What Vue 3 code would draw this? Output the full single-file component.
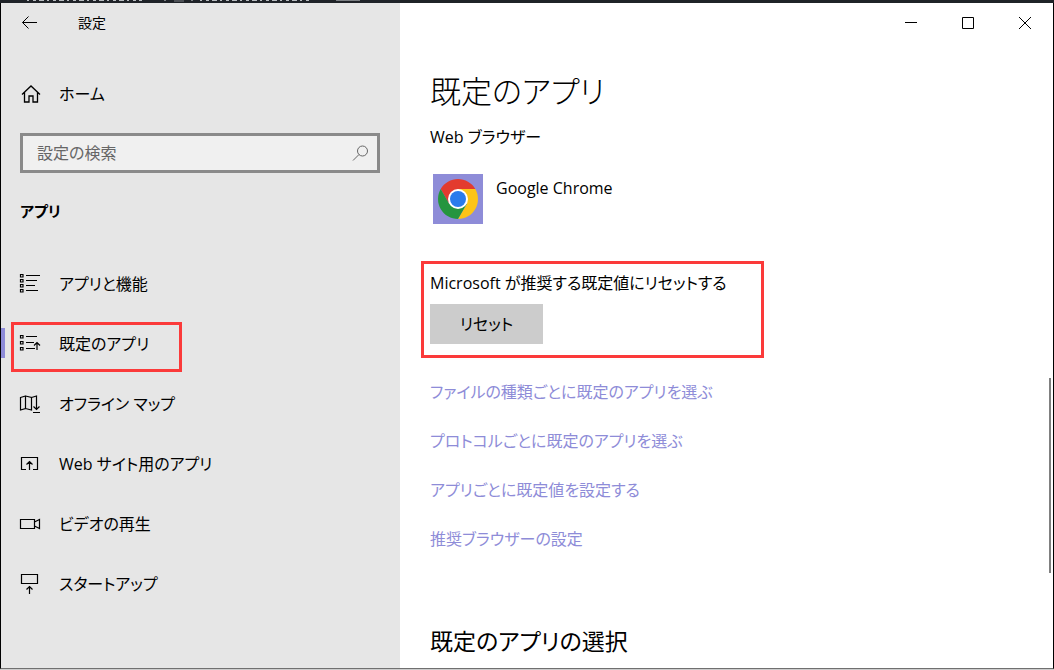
<script setup>
import { ref } from 'vue'

const search = ref('')
const current = ref('default')

const navItems = [
  { id: 'features', label: 'アプリと機能' },
  { id: 'default', label: '既定のアプリ' },
  { id: 'maps', label: 'オフライン マップ' },
  { id: 'web', label: 'Web サイト用のアプリ' },
  { id: 'video', label: 'ビデオの再生' },
  { id: 'startup', label: 'スタートアップ' }
]

const links = [
  'ファイルの種類ごとに既定のアプリを選ぶ',
  'プロトコルごとに既定のアプリを選ぶ',
  'アプリごとに既定値を設定する',
  '推奨ブラウザーの設定'
]
</script>

<template>
  <div class="screen">
    <div class="backdrop">
      <!-- lower edge of the window behind -->
      <svg width="340" height="3" viewBox="0 0 340 3">
        <path class="dashes" d="M0 .5h115M173 .5h112" />
        <path class="solid" d="M137 .5h2M147 1h10M164 .5h2M309 .5h24" />
      </svg>
    </div>
    <div class="window">
      <aside class="sidebar">
        <header class="title-bar">
          <button class="back" type="button" aria-label="戻る">
            <svg width="16" height="14" viewBox="0 0 16 14">
              <path d="M16 6.500H1.500M7.500.5l-6 6 6 6" />
            </svg>
          </button>
          <span class="window-title">設定</span>
        </header>

        <a class="home" href="#">
          <svg width="20" height="20" viewBox="0 0 20 20">
            <path d="M1 10.500L10 2l9 8.500M3.500 8.500V18H8v-6h4v6h4.500V8.500" />
          </svg>
          <span>ホーム</span>
        </a>

        <form class="search" @submit.prevent>
          <input v-model="search" type="text" placeholder="設定の検索" aria-label="設定の検索">
          <button type="submit" aria-label="検索">
            <svg width="18" height="18" viewBox="0 0 18 18">
              <circle cx="11.500" cy="7" r="5" />
              <path d="M8 10.500L2 16.500" />
            </svg>
          </button>
        </form>

        <h2 class="category">アプリ</h2>

        <nav>
          <ul class="nav-list">
            <li v-for="item in navItems" :key="item.id">
              <a
                href="#"
                class="nav-item"
                :class="{ active: current === item.id, marked: item.id === 'default' }"
                @click.prevent="current = item.id"
              >
                <svg width="22" height="22" viewBox="0 0 22 22">
                  <template v-if="item.id === 'features'">
                    <path class="dots" d="M1.500 1.500h2.500v2.500h-2.500zM1.500 6.500h2.500v2.500h-2.500zM1.500 11.500h2.500v2.500h-2.500zM1.500 16.500h2.500v2.500h-2.500z" />
                    <path d="M7 2.500h14M7 7.500h11M7 12.500h9M7 17.500h12" />
                  </template>
                  <template v-else-if="item.id === 'default'">
                    <path class="dots" d="M1.500 2.500h2.500v2.500h-2.500zM1.500 8.500h2.500v2.500h-2.500zM1.500 14.500h2.500v2.500h-2.500z" />
                    <path d="M7 3.500h11M7 9.500h8M7 15.500h9M18 17v-7M15 12.500l3-3 3 3" />
                  </template>
                  <template v-else-if="item.id === 'maps'">
                    <path d="M1.500 4.500L6.500 3v12.500l-5 1.500zM6.500 3l6 1.500v12.500l-6-1.500M12.500 4.500l5-1.500v13M14.500 13.500l3 3 3-3M14 19.500h7" />
                  </template>
                  <template v-else-if="item.id === 'web'">
                    <path d="M7 16.500H2.500v-12h16v12H14M10.500 17V9M7.500 11.500l3-3 3 3" />
                  </template>
                  <template v-else-if="item.id === 'video'">
                    <path d="M1.500 6.500h14v9h-14zM15.500 9l5-2.500v9l-5-2.500" />
                  </template>
                  <template v-else>
                    <path d="M2.500 1.500h16v9h-16zM10.500 21v-7M7.500 16.500l3-3 3 3" />
                  </template>
                </svg>
                <span>{{ item.label }}</span>
              </a>
            </li>
          </ul>
        </nav>
      </aside>

      <main class="content">
        <div class="window-buttons">
          <button type="button" aria-label="最小化">
            <svg width="12" height="12" viewBox="0 0 12 12"><path d="M0 5.500h12" /></svg>
          </button>
          <button type="button" aria-label="最大化">
            <svg width="12" height="12" viewBox="0 0 12 12"><path d="M.5.5h11v11H.5z" /></svg>
          </button>
          <button type="button" aria-label="閉じる">
            <svg width="12" height="12" viewBox="0 0 12 12"><path d="M0 0l12 12M12 0L0 12" /></svg>
          </button>
        </div>

        <h1>既定のアプリ</h1>
        <p class="label">Web ブラウザー</p>

        <button class="app" type="button">
          <span class="app-icon">
            <svg width="42" height="42" viewBox="0 0 42 42">
              <path class="red" d="M3.700 11A20 20 0 0 1 38.300 11H21L12.300 26z" />
              <path class="yellow" d="M38.300 11A20 20 0 0 1 21 41L29.700 26 21 11z" />
              <path class="green" d="M21 41A20 20 0 0 1 3.700 11L12.300 26H29.700z" />
              <circle class="white" cx="21" cy="21" r="10" />
              <circle class="blue" cx="21" cy="21" r="8" />
            </svg>
          </span>
          <span class="app-name">Google Chrome</span>
        </button>

        <section class="reset marked">
          <p id="reset-label" class="label">Microsoft が推奨する既定値にリセットする</p>
          <button class="reset-btn" type="button" aria-describedby="reset-label">リセット</button>
        </section>

        <ul class="links">
          <li v-for="link in links" :key="link"><a href="#">{{ link }}</a></li>
        </ul>

        <h2 class="choose">既定のアプリの選択</h2>
        <div class="scroll-thumb"></div>
      </main>
    </div>
  </div>
</template>

<style>
body {
  margin: 0;
}
</style>

<style scoped>
*, *::before, *::after {
  box-sizing: border-box;
}
.screen {
  display: flex;
  flex-direction: column;
  min-height: 100vh;
  padding-bottom: 1px;
  background: #ccc;
  font-family: "Open Sans", "Noto Sans CJK JP", sans-serif;
  font-feature-settings: "palt";
  font-size: 16px;
  line-height: 24px;
  color: #000;
}
.backdrop {
  height: 3px;
  padding-left: 27px;
  background: #1f2328;
}
.backdrop svg {
  stroke: #b8bcc0;
}
.dashes {
  stroke-dasharray: 2 4 3 3 5 3;
}
.solid {
  stroke: #7c8084;
}
.window {
  flex: 1;
  display: flex;
  border: 1px solid #000;
  border-top: 0;
  border-bottom-color: #707070;
}
h1, h2, p, ul {
  margin: 0;
  padding: 0;
}
li {
  list-style: none;
}
a {
  color: inherit;
  text-decoration: none;
}
button {
  padding: 0;
  border: 0;
  background: none;
  font: inherit;
  font-feature-settings: inherit;
  color: inherit;
}
svg {
  display: block;
  flex: none;
  fill: none;
  stroke: #000;
}

.sidebar {
  flex: 0 0 399px;
  background: #e6e6e6;
}
.title-bar {
  display: flex;
  align-items: center;
  gap: 41px;
  height: 40px;
  padding-left: 20px;
  font-size: 14px;
}
.home {
  display: flex;
  align-items: center;
  gap: 18px;
  height: 40px;
  margin-top: 31px;
  padding-left: 20px;
}
.home svg {
  stroke-width: 1.3;
}
.search {
  display: flex;
  align-items: center;
  height: 40px;
  margin: 19px 20px 0 19px;
  padding: 0 8px 0 14px;
  border: 3px solid #8a8a8a;
  background: #f0f0f0;
}
.search input {
  flex: 1;
  min-width: 0;
  padding: 0;
  border: 0;
  outline: 0;
  background: none;
  font: inherit;
  font-feature-settings: inherit;
}
.search input::placeholder {
  color: #666;
}
.search svg {
  stroke: #666;
}
.category {
  margin: 26px 0 31px 19px;
  font-size: 15px;
  font-weight: 700;
  line-height: 24px;
}
.nav-item {
  position: relative;
  display: flex;
  align-items: center;
  gap: 18px;
  height: 60px;
  padding-left: 18px;
}
.nav-item svg {
  stroke-width: 1.2;
}
.nav-item.active::before {
  content: '';
  position: absolute;
  left: 0;
  top: 14px;
  width: 4px;
  height: 30px;
  background: #8e8cd8;
}
.marked::after {
  content: '';
  position: absolute;
  border: 3px solid #fb3a3a;
  pointer-events: none;
}
.nav-item.marked::after {
  left: 10px;
  top: 8px;
  width: 171px;
  height: 50px;
}

.content {
  position: relative;
  flex: 1;
  min-width: 0;
  padding-left: 30px;
  background: #fff;
}
.window-buttons {
  display: flex;
  justify-content: flex-end;
}
.window-buttons button {
  display: flex;
  align-items: center;
  justify-content: center;
  width: 57px;
  height: 40px;
}
h1 {
  margin-top: 24px;
  font-size: 31px;
  font-weight: 300;
  line-height: 48px;
}
h1 + .label {
  margin-top: 10px;
}
.app {
  display: flex;
  align-items: flex-start;
  gap: 13px;
  margin: 25px 0 0 3px;
}
.app-icon {
  padding: 4px;
  background: #8e8cd8;
}
.app-icon svg {
  stroke: none;
}
.red { fill: #e33b2e; }
.yellow { fill: #fcc418; }
.green { fill: #25953f; }
.white { fill: #fff; }
.blue { fill: #2a7bec; }
.app-name {
  margin-top: 2px;
}
.reset {
  position: relative;
  margin-top: 47px;
}
.reset.marked::after {
  left: -9px;
  top: -10px;
  width: 343px;
  height: 97px;
}
.reset-btn {
  min-width: 113px;
  height: 40px;
  margin-top: 9px;
  background: #ccc;
}
.links {
  display: flex;
  flex-direction: column;
  gap: 25px;
  margin-top: 36px;
  color: #8e8cd8;
}
.choose {
  margin-top: 72px;
  font-size: 23px;
  font-weight: 400;
  line-height: 36px;
}
.scroll-thumb {
  position: absolute;
  right: 2px;
  top: 375px;
  width: 2px;
  height: 195px;
  background: #808080;
}
</style>
